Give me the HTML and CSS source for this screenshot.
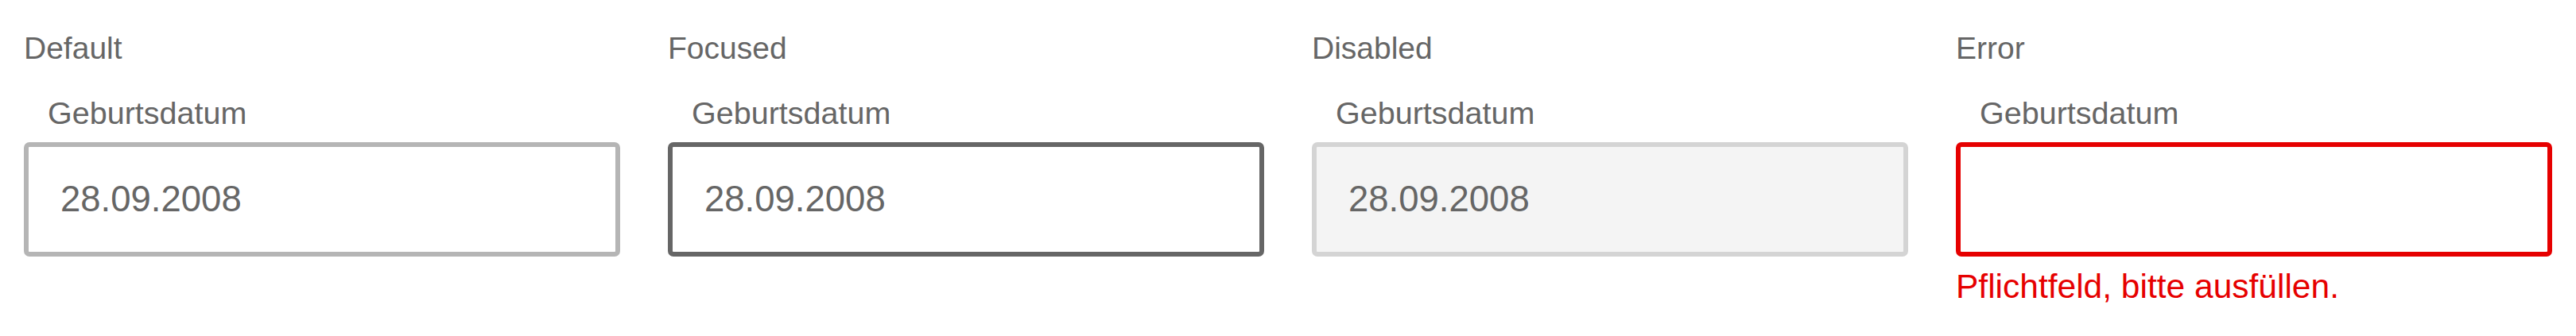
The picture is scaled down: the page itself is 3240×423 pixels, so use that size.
FILE: index.html
```html
<!DOCTYPE html>
<html lang="de">
<head>
<meta charset="utf-8">
<title>Geburtsdatum – Zustände</title>
<link rel="stylesheet" href="styles.css">
</head>
<body>
<main class="states">
  <section class="state">
    <h2 class="state-title">Default</h2>
    <label class="field-label">Geburtsdatum</label>
    <div class="field field-default"><span class="field-value">28.09.2008</span></div>
  </section>
  <section class="state">
    <h2 class="state-title">Focused</h2>
    <label class="field-label">Geburtsdatum</label>
    <div class="field field-focused"><span class="field-value">28.09.2008</span></div>
  </section>
  <section class="state">
    <h2 class="state-title">Disabled</h2>
    <label class="field-label">Geburtsdatum</label>
    <div class="field field-disabled"><span class="field-value">28.09.2008</span></div>
  </section>
  <section class="state">
    <h2 class="state-title">Error</h2>
    <label class="field-label">Geburtsdatum</label>
    <div class="field field-error"><span class="field-value"></span></div>
    <p class="field-error-msg">Pflichtfeld, bitte ausfüllen.</p>
  </section>
</main>
</body>
</html>
```
FILE: styles.css
```css
html, body {
  margin: 0;
  padding: 0;
  background: #ffffff;
}

body {
  font-family: "Liberation Sans", Arial, Helvetica, sans-serif;
  color: #666666;
}

.states {
  display: grid;
  grid-template-columns: repeat(4, 750px);
  column-gap: 60px;
  padding: 37px 30px 0 30px;
}

.state {
  display: flex;
  flex-direction: column;
}

.state-title {
  margin: 0;
  font-size: 39px;
  line-height: 48px;
  font-weight: normal;
  color: #666666;
}

.field-label {
  display: block;
  margin: 33px 0 0 0;
  padding-left: 30px;
  font-size: 39.5px;
  line-height: 48px;
  color: #666666;
}

.field {
  box-sizing: border-box;
  height: 144px;
  margin-top: 13px;
  border: 6px solid #b5b5b5;
  border-radius: 7px;
  background: #ffffff;
  display: flex;
  align-items: center;
  padding: 0 40px;
}

.field-value {
  font-size: 45.5px;
  line-height: 46px;
  color: #666666;
}

.field-focused {
  border-color: #666666;
}

.field-disabled {
  border-color: #d4d4d4;
  background: #f4f4f4;
}

.field-error {
  border-color: #e60000;
}

.field-error-msg {
  margin: 14px 0 0 0;
  font-size: 42.5px;
  line-height: 48px;
  color: #e60000;
}
```
